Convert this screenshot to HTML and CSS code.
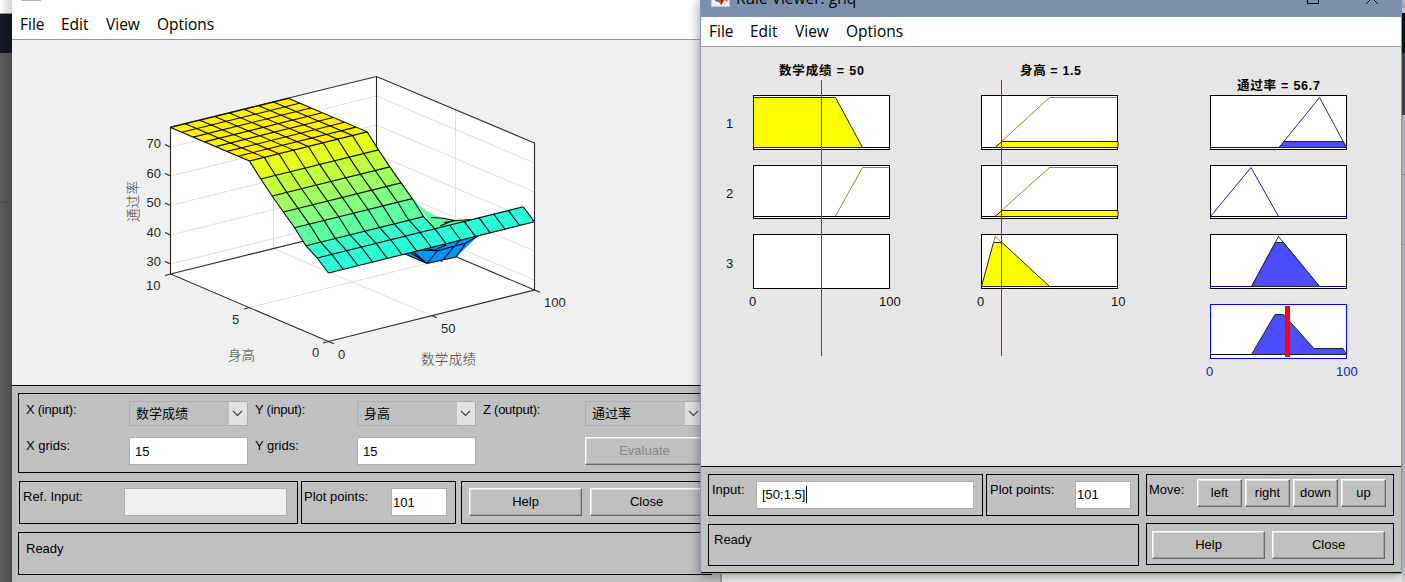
FILE: index.html
```
<!DOCTYPE html>
<html lang="zh">
<head>
<meta charset="utf-8">
<title>Rule Viewer: ghq</title>
<link rel="stylesheet" href="styles.css">
</head>
<body>
<div class="desktop">
  <div class="edge edge-left"></div>
  <div class="edge edge-right"></div>

  <section class="window surface-window">
    <nav class="menubar">
      <span class="app-icon-stub"></span>
      <span class="menu m-file">File</span><span class="menu m-edit">Edit</span><span class="menu m-view">View</span><span class="menu">Options</span>
    </nav>
    <svg class="surface-plot" viewBox="12 41 708 344" width="708" height="344">
      <defs>
        <path id="profile" d="M328.5 273 317.2 258 305.9 245.7 294.6 227.7 283.4 212 272.1 196 260.8 179 249.5 161 170.5 127.5"/>
        <path id="step" d="M328.5 273 317.2 258"/>
        <path id="across" d="M0 0 117.7 -29.1"/>
      </defs>
      <path fill="#fff" d="M170.5 127 376.5 76 534.5 143V290L328.5 341 170.5 274Z"/>
      <g class="grid">
        <path d="M170.5 147 376.5 96 534.5 163M170.5 176 376.5 125 534.5 192M170.5 205.5 376.5 154.500 534.5 221.500M170.5 235 376.5 184 534.5 251M170.5 264 376.5 213 534.5 280"/>
        <path d="M273.5 101.500V248.500L431.500 315.500M455.500 109.500V256.500L249.500 307.500"/>
      </g>
      <path class="axis" d="M170.5 127 376.500 76.500 534.500 143V290L328.500 341.500 170.500 274ZM376.500 76V223M170.500 274 376.500 223 534.500 290"/>
      <path class="axis" d="M165 144.500l5.500 2.500M165 173.500l5.500 2.500M165 203l5.500 2.500M165 232.500l5.500 2.500M165 261.500l5.500 2.500M165 275.500l5.500-1.500M244 309l5.500-1.500M323 343l5.500-1.500 5.500 2.200M431.500 315.500l5.500 2.300M534.500 290l5.500 2.300"/>

      <path fill="#5cffa3" d="M412 198Q427 214 441 217.500L456 220 466 220.500 434.900 229Z"/>
      <path class="mesh" d="M431 217.500 443 218.200 457 221M444 222.500 457 220.500 470 219.500M440 226 452 221"/>
      <path fill="#0094ff" d="M404 253.500 427 263.500 456 257 478 236Z"/>
      <path class="mesh" d="M404 253.500 427 263.500 456 257 466 243 478 236M410 252 427 263.500M413 251.500 427 263.500 437 251 466 243M441 262 453 248 459 241M417 250 434 250.500 446 245M425 248 437 251"/>

      <path fill="#28ffd8" d="M328.500 273 317.200 258 523.200 206.800 534.500 221.800Z"/>
      <path fill="#35ffca" d="M317.200 258 305.900 245.700 423.600 216.600 434.900 228.800Z"/>
      <path fill="#5cffa3" d="M305.900 245.700 294.600 227.700 412.300 198.600 423.600 216.600Z"/>
      <path fill="#80ff80" d="M294.600 227.700 283.400 212 401.100 182.900 412.300 198.600Z"/>
      <path fill="#a0ff60" d="M283.400 212 272.100 196 389.800 166.900 401.100 182.900Z"/>
      <path fill="#c2ff3d" d="M272.100 196 260.800 179 378.500 149.900 389.800 166.900Z"/>
      <path fill="#e6ff19" d="M260.800 179 249.500 161 367.200 131.900 378.500 149.900Z"/>
      <path fill="#ffef00" d="M249.500 161 170.500 127.500 288.200 98.400 367.200 131.900Z"/>
      <g class="mesh">
        <use href="#profile"/><use href="#profile" x="14.714" y="-3.643"/><use href="#profile" x="29.428" y="-7.286"/>
        <use href="#profile" x="44.142" y="-10.929"/><use href="#profile" x="58.856" y="-14.572"/><use href="#profile" x="73.570" y="-18.215"/>
        <use href="#profile" x="88.284" y="-21.858"/><use href="#profile" x="102.998" y="-25.501"/><use href="#profile" x="117.700" y="-29.144"/>
        <use href="#step" x="132.400" y="-32.787"/><use href="#step" x="147.100" y="-36.430"/><use href="#step" x="161.850" y="-40.073"/>
        <use href="#step" x="176.600" y="-43.716"/><use href="#step" x="191.300" y="-47.359"/><use href="#step" x="206" y="-51.200"/>
        <path d="M328.500 273 534.500 221.800M317.200 258 523.200 206.800"/>
        <use href="#across" x="305.900" y="245.700"/><use href="#across" x="294.600" y="227.700"/><use href="#across" x="283.400" y="212"/>
        <use href="#across" x="272.100" y="196"/><use href="#across" x="260.800" y="179"/><use href="#across" x="249.500" y="161"/>
        <use href="#across" x="238.200" y="156.200"/><use href="#across" x="226.900" y="151.400"/><use href="#across" x="215.600" y="146.600"/>
        <use href="#across" x="204.400" y="141.900"/><use href="#across" x="193.100" y="137.100"/><use href="#across" x="181.800" y="132.300"/>
        <use href="#across" x="170.500" y="127.500"/>
      </g>
      <g class="tick">
        <text x="146.500" y="148">70</text><text x="146.500" y="178">60</text><text x="146.500" y="207">50</text><text x="146.500" y="237">40</text><text x="146.500" y="266">30</text>
        <text x="146" y="290">10</text><text x="232" y="324">5</text><text x="312" y="357">0</text>
        <text x="338" y="359">0</text><text x="441" y="333">50</text><text x="544" y="307">100</text>
      </g>
      <g class="axis-name">
        <text x="228" y="360" textLength="27">身高</text>
        <text x="421" y="364" textLength="55">数学成绩</text>
        <text transform="translate(138 222) rotate(-90)" textLength="41">通过率</text>
      </g>
    </svg>

    <div class="controls left-controls">
      <div class="panel inputs-panel">
        <label class="tight">X (input):</label>
        <div class="combo"><span>数学成绩</span><i><svg width="11" height="7" viewBox="0 0 11 7"><path d="M1 1 5.500 5.500 10 1"/></svg></i></div>
        <label class="tight">Y (input):</label>
        <div class="combo"><span>身高</span><i><svg width="11" height="7" viewBox="0 0 11 7"><path d="M1 1 5.500 5.500 10 1"/></svg></i></div>
        <label class="tight">Z (output):</label>
        <div class="combo"><span>通过率</span><i><svg width="11" height="7" viewBox="0 0 11 7"><path d="M1 1 5.500 5.500 10 1"/></svg></i></div>
        <label>X grids:</label>
        <div class="field">15</div>
        <label>Y grids:</label>
        <div class="field">15</div>
        <span></span>
        <div class="button disabled">Evaluate</div>
      </div>
      <div class="row">
        <div class="panel ref-panel"><label>Ref. Input:</label><div class="field empty"></div></div>
        <div class="panel points-panel"><label>Plot points:</label><div class="field short">101</div></div>
        <div class="panel action-panel"><div class="button">Help</div><div class="button">Close</div></div>
      </div>
      <div class="panel status-panel">Ready</div>
    </div>
  </section>

  <section class="window rule-window">
    <header class="titlebar">
      <svg class="logo" width="20" height="20" viewBox="0 0 20 20"><rect x=".5" y=".5" width="18" height="18" fill="#eef0f2" stroke="#c4c8cc"/><path fill="#3a86b8" d="M2 11 7 8 11 4 9 13 6 14Z"/><path fill="#d9531e" d="M6 14 9 11 12 3 17 14 13 12 10 17 8 14Z"/><path fill="#8b1e10" d="M10 10 12 3 13 12 10 17Z"/></svg>
      <span class="title">Rule Viewer: ghq</span>
      <svg class="window-icons" width="80" height="12" viewBox="0 0 80 12"><path d="M1.500 0V10.500H12.500V0M61 0 66 5 71 0M66 5 60 11M66 5 72 11"/></svg>
    </header>
    <nav class="menubar">
      <span class="menu m-file">File</span><span class="menu m-edit">Edit</span><span class="menu m-view">View</span><span class="menu">Options</span>
    </nav>
    <svg class="rule-plot" viewBox="701 48 700 418" width="700" height="418">
      <g class="boxes">
        <rect x="753.500" y="95.500" width="136" height="54"/><rect x="753.500" y="165.500" width="136" height="52.500"/><rect x="753.500" y="234.500" width="136" height="54"/>
        <rect x="981.500" y="95.500" width="136" height="54"/><rect x="981.500" y="165.500" width="136" height="52.500"/><rect x="981.500" y="234.500" width="136" height="54"/>
        <rect x="1210.500" y="95.500" width="136" height="54"/><rect x="1210.500" y="165.500" width="136" height="52.500"/><rect x="1210.500" y="234.500" width="136" height="54"/>
        <rect class="out" x="1210.500" y="304.500" width="136" height="54"/>
      </g>
      <g class="base"><path d="M753 147.500H889M753 216.500H889M981 147.500H1118M981 216.500H1118M981 286.500H1118M1210 216.500H1279M1210 354.500H1347"/><path class="navy" d="M1210 147.500H1279M1278 216.500H1347M1210 286.500H1347"/></g>
      <g class="yellow">
        <path d="M753.500 147.500V97.500H835.500L862.500 147.500Z"/>
        <path d="M995 147.500 1002 141.500H1118V147.500Z"/><path d="M995 216.500 1002 210.500H1118V216.500Z"/>
        <path d="M981.500 286.500 993.500 242.500H1002L1049.500 286.500Z"/>
      </g>
      <path class="olive" d="M835.500 216 862.500 167.500H889M1001 142 1049.500 97.500H1117M1001 211 1049.500 167.500H1117M993.500 242.500 995 236.500 1002 242.500"/>
      <g class="blue">
        <path d="M1279 147.500 1284 141.500H1343L1346.500 147.500Z"/>
        <path d="M1251.500 286.500 1275.500 242.500H1283.500L1319.500 286.500Z"/>
        <path d="M1251.500 354.500 1275 314.500H1283.500L1314 348.500H1343L1346.500 354.500Z"/>
      </g>
      <path class="outline-blue" d="M1279 147.500 1319.500 97.500 1346.500 147.500M1210.500 216.500 1251 167.500 1278.500 216.500M1251.500 286.500 1278.500 236.500 1319.500 286.500"/>
      <path class="cursor-line" d="M821.500 80V356M1001.500 80V356"/>
      <rect x="1285" y="306" width="5" height="51" fill="#f00"/>
      <g class="heading">
        <text x="779" y="75" textLength="85">数学成绩 = 50</text><text x="1020" y="75" textLength="61">身高 = 1.5</text><text x="1237" y="90" textLength="83">通过率 = 56.7</text>
      </g>
      <g class="num">
        <text x="726" y="128">1</text><text x="726" y="198">2</text><text x="726" y="268">3</text>
        <text x="749" y="306">0</text><text x="879" y="306">100</text><text x="977" y="306">0</text><text x="1111" y="306">10</text>
        <text class="num-blue" x="1206" y="376">0</text><text class="num-blue" x="1336" y="376">100</text>
      </g>
    </svg>
    <div class="controls right-controls">
      <div class="panel input-panel"><label>Input:</label><div class="field">[50;1.5]<b class="caret"></b></div></div>
      <div class="panel points-panel"><label>Plot points:</label><div class="field short">101</div></div>
      <div class="panel move-panel"><label>Move:</label><div class="button">left</div><div class="button">right</div><div class="button">down</div><div class="button">up</div></div>
      <div class="panel status-panel">Ready</div>
      <div class="panel action-panel"><div class="button">Help</div><div class="button">Close</div></div>
    </div>
  </section>
</div>
</body>
</html>
```
FILE: styles.css
```
* { box-sizing: border-box; }
body { margin: 0; font: 13px "Liberation Sans", "Noto Sans CJK SC", sans-serif; color: #000; }
.desktop { position: relative; width: 1405px; height: 582px; overflow: hidden; background: #ededed; }

.edge { position: absolute; top: 0; height: 582px; }
.edge-left { left: 0; width: 12px; background: linear-gradient(#fff 0 13px, #999 13px 14px, #171923 14px 53px, #5d5d5d 53px 202px, #505050 202px 203px, #5d5d5d 203px); }
.edge-left::after { content: ""; display: block; height: 100%; background: linear-gradient(90deg, transparent, rgba(0, 0, 0, .18)); }
.edge-right { left: 1402px; width: 3px; background: linear-gradient(#c4c4c4 0 8px, #e4e4e4 8px 13px, #10161f 13px 53px, #505050 53px 115px, #d4d4d4 115px 174px, #aaa 174px 175px, #d4d4d4 175px 244px, #aaa 244px 245px, #d4d4d4 245px); }

.window { position: absolute; display: flex; flex-direction: column; }
.surface-window { left: 12px; top: 0; width: 710px; height: 590px; background: #f0f0f0; border-right: 2px solid #999; box-shadow: inset -1px 0 #000; }
.rule-window { left: 700px; top: 0; width: 702px; height: 574px; background: #e6e6e6; border: solid #8296b6; border-width: 0 1px 1px; box-shadow: 0 1px 11px rgba(0, 0, 0, .42); }

.menubar { position: relative; display: flex; flex: none; background: #fff; border-bottom: 1px solid #999; font: 15.500px/20px "Open Sans", "Noto Sans", sans-serif; }
.surface-window .menubar { height: 40px; padding: 14px 0 0 8px; margin-bottom: 1px; }
.rule-window .menubar { height: 30px; padding: 4px 0 0 8px; margin-bottom: 1px; }
.m-file { width: 41px; }
.m-edit { width: 45px; }
.m-view { width: 51px; }
.app-icon-stub { position: absolute; left: 9px; top: 0; width: 20px; height: 1px; background: #b5b5b5; }

.titlebar { display: flex; flex: none; height: 17px; overflow: hidden; background: #7c90ae; }
.logo { flex: none; margin: -12px 5px 0 10px; }
.title { flex: 1; margin-top: -13px; font: 15.500px/22px "Open Sans", "Noto Sans", sans-serif; }
.window-icons { flex: none; width: 80px; margin: -7px 15px 0 0; fill: none; stroke: #000; }

.surface-plot, .rule-plot { display: block; flex: none; }
.grid { fill: none; stroke: #dedede; }
.axis { fill: none; stroke: #262626; stroke-width: 1.100; }
.mesh { fill: none; stroke: #0a0a0a; stroke-width: 1.100; }
.tick { font-size: 13px; fill: #262626; }
.axis-name { font: 300 13.500px "Noto Sans CJK SC", sans-serif; fill: #3a3a3a; }

.boxes rect { fill: #fff; stroke: #000; shape-rendering: crispEdges; }
.boxes .out { stroke: #00f; }
.base { stroke: #000; }
.navy { stroke: #00008a; }
.yellow { fill: #ff0; stroke: #222; }
.olive { fill: none; stroke: #8c8c2a; }
.blue { fill: #4d4dff; stroke: #222; }
.outline-blue { fill: none; stroke: #22228e; }
.cursor-line { stroke: #f00; }
.heading { font: bold 12.500px "Liberation Sans", "Noto Sans CJK SC", sans-serif; }
.num { font-size: 13px; fill: #111; }
.num-blue { fill: #11d; }

.controls { flex: none; border-top: 1px solid #000; background: #c0c0c0; }
.panel { border: 1px solid #000; }
.field { height: 28px; padding: 0 5px; border: 1px solid #abadb3; background: #fff; line-height: 27px; }
.field.short { width: 56px; padding: 0 1px; }
.field.empty { width: 163px; background: #f0f0f0; }
.button { height: 28px; border: 1px solid; border-color: #fff #696969 #696969 #fff; box-shadow: inset -1px -1px #a0a0a0, inset 1px 1px #e3e3e3; line-height: 26px; text-align: center; }
.disabled { color: #868686; }
label { white-space: nowrap; }
.tight { letter-spacing: -.25px; }

.left-controls { height: 205px; padding: 7px 7px 0 6px; }
.inputs-panel { display: grid; grid-template-columns: 110px 119px 109px 119px 109px 119px; grid-template-rows: 25px 28px; row-gap: 11px; height: 80px; padding-top: 7px; }
.inputs-panel label { padding-left: 7px; line-height: 17px; }
.combo { display: flex; justify-content: space-between; border: 1px solid #abadb3; padding-left: 6px; line-height: 23px; }
.combo i { display: flex; align-items: center; justify-content: center; width: 18px; padding-right: 2px; background: #e1e1e1; }
.combo path { fill: none; stroke: #444; stroke-width: 1.200; }
.row { display: flex; margin: 8px 0 0 1px; }
.row .panel { display: flex; height: 43px; padding-top: 6px; }
.row label { line-height: 18px; }
.ref-panel { width: 279px; margin-right: 3px; padding-left: 3px; justify-content: space-between; padding-right: 10px; }
.points-panel { width: 155px; justify-content: space-between; padding: 6px 8px 0 2px; }
.row .action-panel { flex: 1; margin-left: 5px; padding-left: 7px; gap: 8px; }
.action-panel .button { width: 113px; flex: none; }
.status-panel { height: 43px; padding: 7px 7px; line-height: 17px; }
.left-controls .status-panel { margin-top: 8px; width: 694px; }

.right-controls { display: grid; grid-template-columns: 275px 153px 248px; grid-template-rows: 42px 42px; column-gap: 3px; row-gap: 8px; height: 107px; padding: 7px 0 0 7px; border-bottom: 1px solid #000; }
.right-controls .panel { display: flex; height: 42px; }
.right-controls label { line-height: 17px; }
.input-panel { justify-content: space-between; padding: 6px 8px 0 3px; }
.input-panel .field { width: 218px; display: flex; line-height: 25px; }
.caret { width: 1px; height: 17px; margin: 4px 0 0 1px; background: #000; }
.right-controls .points-panel { width: 153px; padding: 6px 7px 0 3px; }
.right-controls .points-panel .field { line-height: 25px; }
.right-controls .move-panel, .right-controls .action-panel { margin-left: 4px; width: 248px; }
.move-panel { gap: 3px; padding: 4px 7px 0 2px; }
.move-panel label { width: 46px; padding-top: 2px; }
.move-panel .button { width: 45px; flex: none; }
.right-controls .status-panel { grid-column: 1 / 3; width: 431px; padding: 6px 5px; }
.right-controls .action-panel { padding: 7px 0 0 5px; gap: 7px; margin-top: -1px; }
```
